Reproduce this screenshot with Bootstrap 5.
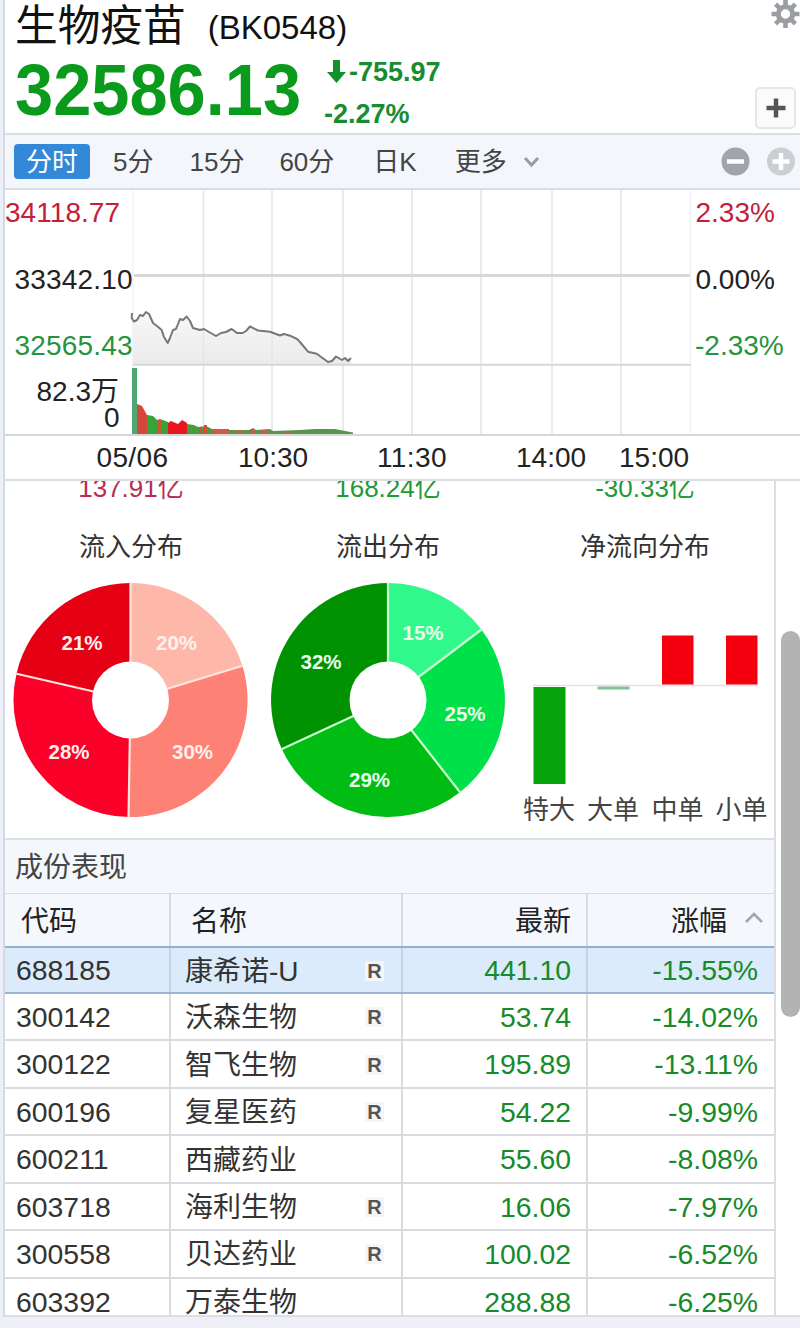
<!DOCTYPE html>
<html lang="zh-CN">
<head>
<meta charset="utf-8">
<meta name="viewport" content="width=device-width, initial-scale=1">
<title>生物疫苗 (BK0548)</title>
<link href="https://cdn.jsdelivr.net/npm/bootstrap@5.3.0/dist/css/bootstrap.min.css" rel="stylesheet">
<style>
  body { font-family: "Liberation Sans", "Noto Sans CJK SC", sans-serif; background: #eff0f7; color: #333; overflow: hidden; }
  svg { display: block; }
  svg text { font-family: "Liberation Sans", "Noto Sans CJK SC", sans-serif; }
  .quote-app { height: 1328px; border-left: 3px solid #eceef8; overflow: hidden; }
  .quote-panel { height: 1317px; border-left: 2px solid #d5d9e4; border-bottom: 2px solid #dcdde5; overflow: hidden; }
  .down { color: #0a9a1c; }
  .quote-head { height: 135px; border-bottom: 2px solid #dcdee3; padding-left: 10px; }
  .stock-name { font-size: 42.7px; line-height: 52px; color: #111; }
  .stock-code { font-size: 33px; line-height: 56px; height: 52px; color: #111; margin-left: 22px; }
  .last-price { font-size: 68.6px; line-height: 77px; width: 309px; }
  .last-price span { display: inline-block; transform: scaleY(1.05); }
  .delta { font-size: 27px; line-height: 42px; color: #178c30; margin-top: -1px; }
  .add-btn { width: 41px; height: 42px; border: 2px solid #e6e6e8; border-radius: 5px; background: #fbfbfc; }
  .head-tools { width: 45px; }
  .period-bar { height: 55px; background: #f3f7fc; border-bottom: 2px solid #d9dee6; font-size: 26px; color: #444; padding-left: 9px; }
  .period-bar .tab { line-height: 36px; height: 35px; white-space: nowrap; }
  .period-bar .tab.on { background: #3488d8; color: #fff; border-radius: 4px; width: 76px; text-align: center; }
  .trend { height: 291px; border-bottom: 2px solid #dcdee2; }
  .flow-wrap { width: 771px; border-right: 2px solid #dcdee4; }
  .flow { height: 357px; width: 771px; margin-left: -2.5px; }
  .flow-sum { height: 30px; font-size: 26px; line-height: 30px; overflow: hidden; }
  .flow-sum span { display: block; margin-top: -8px; }
  .flow-title { font-size: 26px; line-height: 40px; margin-top: 16px; color: #333; }
  .flow-chart { margin-top: 14px; }
  .section-title { height: 56px; border-top: 2px solid #dde0e6; border-bottom: 1px solid #d8dce2; background: #f4f7fc; font-size: 28px; line-height: 55px; padding-left: 10px; color: #444; }
  .grid-row { height: 47.45px; font-size: 28.4px; line-height: 46px; border-bottom: 2px solid #dadae0; }
  .grid-row > div { border-right: 2px solid #dadbe1; white-space: nowrap; height: 100%; }
  .grid-row > div:last-child { border-right: 0; }
  .c-code { width: 166px; padding-left: 11px; }
  .c-name { width: 232px; padding: 3px 17px 0 14px; font-size: 28px; }
  .c-last { width: 185px; padding-right: 15px; }
  .c-rate { width: 186px; padding-right: 16px; }
  .grid-row .num { color: #168a2c; }
  .grid-row.grid-head { height: 54px; line-height: 55px; font-size: 28px; color: #222; background: #f4f7fc; border-bottom: 2px solid #8fb0d4; }
  .grid-head .c-code { padding-left: 16px; }
  .grid-head .c-name { padding: 0 0 0 20px; }
  .grid-head .c-rate { padding-right: 15px; }
  .grid-row.picked { height: 46px; line-height: 44px; background: #dcebfc; border-bottom-color: #9ab5cf; }
  .picked > div { border-color: #c5d3e3 !important; }
  .mark-r { font-size: 20px; font-weight: 700; color: #555; background: #f5f5f6; line-height: 20px; width: 19px; text-align: center; margin-top: -2px; }
  .scroll-track { width: 24px; }
  .scroll-thumb { width: 19px; height: 386px; margin: 150px 0 0 5px; border-radius: 10px; background: #b3b3b3; }
</style>
</head>
<body>
<main class="quote-app">
<div class="quote-panel bg-white">
  <header class="quote-head d-flex justify-content-between">
    <div>
      <div class="d-flex">
        <span class="stock-name">生物疫苗</span><span class="stock-code">(BK0548)</span>
      </div>
      <div class="d-flex">
        <div class="last-price fw-bold down"><span>32586.13</span></div>
        <div class="delta fw-bold">
          <div class="d-flex align-items-center">
            <svg width="25" height="26" viewBox="0 0 25 26"><path d="M9 1h7v12h6L12.5 24 3 13h6z" fill="#10912a"/></svg>-755.97
          </div>
          <div>-2.27%</div>
        </div>
      </div>
    </div>
    <div class="head-tools d-flex flex-column justify-content-between pb-1">
      <svg width="45" height="30" viewBox="755 0 45 30">
        <g stroke="#9a9ea3" stroke-width="4.6"><path d="M785.500 0V28M771.500 14H799.500M775.600 4.100 795.400 23.900M795.400 4.100 775.600 23.900"/></g>
        <circle cx="785.500" cy="14" r="7.200" fill="#fff" stroke="#9a9ea3" stroke-width="5"/>
      </svg>
      <div class="add-btn d-flex align-items-center justify-content-center">
        <svg width="20" height="20" viewBox="0 0 20 20"><path d="M10 .5v19M.5 10h19" stroke="#555" stroke-width="4.400"/></svg>
      </div>
    </div>
  </header>

  <nav class="period-bar d-flex align-items-center">
    <span class="tab on">分时</span>
    <span class="tab" style="margin-left:23px">5分</span>
    <span class="tab" style="margin-left:36px">15分</span>
    <span class="tab" style="margin-left:35px">60分</span>
    <span class="tab" style="margin-left:39px">日K</span>
    <span class="tab" style="margin-left:38px">更多</span>
    <svg class="ms-3" width="18" height="14" viewBox="0 0 18 14"><path d="M2 3 8.500 10l6.500-7" fill="none" stroke="#999da2" stroke-width="3"/></svg>
    <svg class="ms-auto" width="80" height="30" viewBox="720 147 80 30">
      <circle cx="735.500" cy="161.500" r="14" fill="#a1a4a8"/><path d="M727 161.500h17" stroke="#fff" stroke-width="4.500"/>
      <circle cx="781" cy="161.500" r="14" fill="#ccced1"/><path d="M772.500 161.500h17M781 153v17" stroke="#fff" stroke-width="4.500"/>
    </svg>
  </nav>

  <section class="trend">
    <svg width="795" height="289" viewBox="5 190 795 289">
      <defs><linearGradient id="fade" x1="0" y1="0" x2="0" y2="1"><stop offset="0" stop-color="#f7f7f7"/><stop offset="1" stop-color="#ebebeb"/></linearGradient></defs>
      <path d="M132 313 134 321.500 140 315 146 312 153 323 161.700 330 167.700 343 173 330 180 319 186.700 317 193 328 204 330 216 336 231.700 329 242.700 333 250 326.500 258 330.500 270 331.700 280 335.500 290 335.700 300 342 308 351.700 316.700 353.700 328 362 336 357 342 360 351 359V364H132z" fill="url(#fade)"/>
      <g stroke="#e4e5ea" stroke-width="1.500"><path d="M203.500 190V434M272 190V434M343 190V434M412 190V434M481 190V434M552 190V434M621 190V434"/><path d="M133 190V434M690.500 190V434" stroke="#f0f2f6"/></g>
      <path d="M134 275.500H690" stroke="#d8d8da" stroke-width="3"/>
      <path d="M133 364.800H691" stroke="#d4d7da" stroke-width="2"/>
      <path d="M132 313 131.700 318 134 321.500 137 320 140 315 143 316 146 312 149 314 153 323 157 326 161.700 330 164 337 167.700 343 170 338 173 330 176 329 180 319 183 320 186.700 316.500 190 321 193 328 200 330 204 329 209 332 216 336 221 333 226 332 231.700 329 237 333 242.700 333 246 331 250 326.500 258 330.500 270 331.700 280 335.500 284 334 290 335.700 297 339 300 342 308 351.700 316.700 353.700 328 362 332 361 336 356.500 342 360 345 358 348 361 351 358" fill="none" stroke="#777" stroke-width="2" stroke-linejoin="round"/>
      <path d="M132 368h5v66h-5z" fill="#4fa873"/>
      <path d="M137 404 142 406 147 415V434H137z" fill="#d4483a"/>
      <path d="M147 415 153 416 157 420 160 419 168 422V434H147z" fill="#36a437"/>
      <path d="M158 420h3v14h-3z" fill="#c9572f"/>
      <path d="M168 423 171 421 178 424 182 420 187 423V434H168z" fill="#e8161f"/>
      <path d="M187 424 194 425 198 427 206 426 212 429V434H187z" fill="#479c3d"/>
      <path d="M199 427h3v7h-3zM204 425h3v9h-3z" fill="#d5512e"/>
      <path d="M212 429 229 429 229 434H212z" fill="#cb5d45"/>
      <path d="M229 430 250 430 253 428 256 430 270 429 273 431 300 430 315 429 335 429 345 431 353 432.500V434H229z" fill="#5a944c"/>
      <path d="M237 430h5v4h-5zM250 429h5v5h-5zM262 430h6v4h-6zM285 431h4v3h-4z" fill="#c75c4a"/>
      <path d="M5 435H800" stroke="#d6d7da" stroke-width="2"/>
      <g font-size="28" fill="#222">
        <text x="5" y="222" textLength="115" fill="#c51d3c">34118.77</text>
        <text x="14.500" y="289" textLength="118">33342.10</text>
        <text x="14.500" y="355" textLength="118" fill="#27943c">32565.43</text>
        <text x="36.500" y="401">82.3<tspan font-size="28">万</tspan></text>
        <text x="104" y="427">0</text>
        <text x="695.500" y="222" fill="#c51d3c">2.33%</text>
        <text x="695.500" y="289">0.00%</text>
        <text x="695" y="355" fill="#27943c">-2.33%</text>
        <text x="96.500" y="467" textLength="71.500">05/06</text>
        <text x="238" y="467">10:30</text>
        <text x="377" y="467" textLength="69.500">11:30</text>
        <text x="516" y="467">14:00</text>
        <text x="619" y="467">15:00</text>
      </g>
    </svg>
  </section>

  <div class="d-flex">
    <div class="flow-wrap">
      <section class="flow row g-0 text-center">
        <div class="col">
          <div class="flow-sum" style="color:#b82e52"><span>137.91亿</span></div>
          <div class="flow-title">流入分布</div>
          <svg class="flow-chart mx-auto" width="244" height="244" viewBox="-122 -122 244 244">
            <g transform="translate(-.5 -3)">
              <path d="M0 0V-117A117 117 0 0 1 111.900-34.200z" fill="#feb8aa"/>
              <path d="M0 0 111.900-34.200A117 117 0 0 1-2 117z" fill="#fe8175"/>
              <path d="M0 0-2 117A117 117 0 0 1-114-26.300z" fill="#fb0029"/>
              <path d="M0 0-114-26.300A117 117 0 0 1 0-117z" fill="#e60013"/>
              <path d="M0 0V-118M0 0 112.900-34.500M0 0-2 118M0 0-115-26.500" stroke="#ffe5e0" stroke-width="2.200"/>
              <circle r="38.500" fill="#fff"/>
              <g font-size="20.500" font-weight="700" fill="#fff0ee" text-anchor="middle"><text x="46" y="-50">20%</text><text x="62" y="59">30%</text><text x="-61.500" y="59">28%</text><text x="-48.500" y="-50">21%</text></g>
            </g>
          </svg>
        </div>
        <div class="col">
          <div class="flow-sum" style="color:#219a34"><span>168.24亿</span></div>
          <div class="flow-title">流出分布</div>
          <svg class="flow-chart mx-auto" width="244" height="244" viewBox="-122 -122 244 244">
            <g transform="translate(0 -3)">
              <path d="M0 0V-117A117 117 0 0 1 93.400-70.400z" fill="#31f88b"/>
              <path d="M0 0 93.400-70.400A117 117 0 0 1 72 92.200z" fill="#00e149"/>
              <path d="M0 0 72 92.200A117 117 0 0 1-106.200 49z" fill="#00bc13"/>
              <path d="M0 0-106.200 49A117 117 0 0 1 0-117z" fill="#009200"/>
              <path d="M0 0V-118M0 0 94.200-71M0 0 72.600 93M0 0-107.100 49.500" stroke="#c9ffd0" stroke-width="2.200"/>
              <circle r="38.500" fill="#fff"/>
              <g font-size="20.500" font-weight="700" fill="#e9ffec" text-anchor="middle"><text x="35" y="-60">15%</text><text x="77" y="21">25%</text><text x="-18.500" y="87">29%</text><text x="-67" y="-31">32%</text></g>
            </g>
          </svg>
        </div>
        <div class="col">
          <div class="flow-sum" style="color:#219a34"><span>-30.33亿</span></div>
          <div class="flow-title">净流向分布</div>
          <svg class="flow-chart mx-auto" width="256" height="244" viewBox="517 581 256 244">
            <path d="M533 685.500H757" stroke="#eadde3" stroke-width="1.500"/>
            <path d="M533.500 687h32v97h-32z" fill="#06a30c"/><path d="M597.500 686.500h32v3h-32z" fill="#82c294"/>
            <path d="M662 635.500h31.500v49H662zM726 635.500h31.500v49H726z" fill="#f5000f"/>
            <g font-size="26" fill="#444" text-anchor="middle"><text x="549" y="819">特大</text><text x="613" y="819">大单</text><text x="677.500" y="819">中单</text><text x="741.500" y="819">小单</text></g>
          </svg>
        </div>
      </section>

      <div class="section-title">成份表现</div>
      <div class="grid-row grid-head d-flex">
        <div class="c-code">代码</div><div class="c-name">名称</div><div class="c-last text-end">最新</div>
        <div class="c-rate d-flex justify-content-end"><span>涨幅</span><svg style="margin:16px -5px 0 17px" width="20" height="16" viewBox="0 0 20 16"><path d="M2 12 10 4l8 8" fill="none" stroke="#a2a5aa" stroke-width="2.500"/></svg></div>
      </div>
      <div class="grid-row picked d-flex"><div class="c-code">688185</div><div class="c-name d-flex justify-content-between align-items-center"><span>康希诺-U</span><span class="mark-r">R</span></div><div class="c-last num text-end">441.10</div><div class="c-rate num text-end">-15.55%</div></div>
      <div class="grid-row d-flex"><div class="c-code">300142</div><div class="c-name d-flex justify-content-between align-items-center"><span>沃森生物</span><span class="mark-r">R</span></div><div class="c-last num text-end">53.74</div><div class="c-rate num text-end">-14.02%</div></div>
      <div class="grid-row d-flex"><div class="c-code">300122</div><div class="c-name d-flex justify-content-between align-items-center"><span>智飞生物</span><span class="mark-r">R</span></div><div class="c-last num text-end">195.89</div><div class="c-rate num text-end">-13.11%</div></div>
      <div class="grid-row d-flex"><div class="c-code">600196</div><div class="c-name d-flex justify-content-between align-items-center"><span>复星医药</span><span class="mark-r">R</span></div><div class="c-last num text-end">54.22</div><div class="c-rate num text-end">-9.99%</div></div>
      <div class="grid-row d-flex"><div class="c-code">600211</div><div class="c-name d-flex justify-content-between align-items-center"><span>西藏药业</span></div><div class="c-last num text-end">55.60</div><div class="c-rate num text-end">-8.08%</div></div>
      <div class="grid-row d-flex"><div class="c-code">603718</div><div class="c-name d-flex justify-content-between align-items-center"><span>海利生物</span><span class="mark-r">R</span></div><div class="c-last num text-end">16.06</div><div class="c-rate num text-end">-7.97%</div></div>
      <div class="grid-row d-flex"><div class="c-code">300558</div><div class="c-name d-flex justify-content-between align-items-center"><span>贝达药业</span><span class="mark-r">R</span></div><div class="c-last num text-end">100.02</div><div class="c-rate num text-end">-6.52%</div></div>
      <div class="grid-row d-flex"><div class="c-code">603392</div><div class="c-name d-flex justify-content-between align-items-center"><span>万泰生物</span></div><div class="c-last num text-end">288.88</div><div class="c-rate num text-end">-6.25%</div></div>
    </div>
    <div class="scroll-track"><div class="scroll-thumb"></div></div>
  </div>
</div>
</main>
<script src="https://cdn.jsdelivr.net/npm/bootstrap@5.3.0/dist/js/bootstrap.bundle.min.js"></script>
</body>
</html>
